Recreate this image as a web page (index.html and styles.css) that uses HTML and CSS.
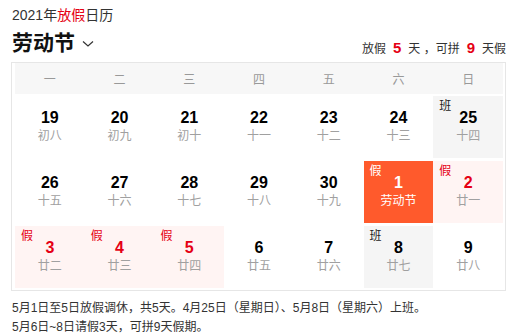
FILE: index.html
```html
<!DOCTYPE html>
<html lang="zh-CN">
<head>
<meta charset="utf-8">
<link rel="stylesheet" href="styles.css">
</head>
<body>
<div class="page">
  <div class="title">2021年<span class="red">放假</span>日历</div>
  <div class="head">
    <div class="holiday">劳动节<svg class="chev" width="12" height="8" viewBox="0 0 12 8"><path d="M1 1.5 L6 6 L11 1.5" fill="none" stroke="#333" stroke-width="1.2"/></svg></div>
    <div class="summary">放假<b class="num">5</b>天 ，可拼<b class="num">9</b>天假</div>
  </div>
  <div class="cal">
    <div class="weekdays">
      <span>一</span><span>二</span><span>三</span><span>四</span><span>五</span><span>六</span><span>日</span>
    </div>
    <div class="grid">
      <div class="cell"><b class="d">19</b><span class="l">初八</span></div>
      <div class="cell"><b class="d">20</b><span class="l">初九</span></div>
      <div class="cell"><b class="d">21</b><span class="l">初十</span></div>
      <div class="cell"><b class="d">22</b><span class="l">十一</span></div>
      <div class="cell"><b class="d">23</b><span class="l">十二</span></div>
      <div class="cell"><b class="d">24</b><span class="l">十三</span></div>
      <div class="cell work"><i class="tag">班</i><b class="d">25</b><span class="l">十四</span></div>

      <div class="cell"><b class="d">26</b><span class="l">十五</span></div>
      <div class="cell"><b class="d">27</b><span class="l">十六</span></div>
      <div class="cell"><b class="d">28</b><span class="l">十七</span></div>
      <div class="cell"><b class="d">29</b><span class="l">十八</span></div>
      <div class="cell"><b class="d">30</b><span class="l">十九</span></div>
      <div class="cell fest"><i class="tag">假</i><b class="d">1</b><span class="l">劳动节</span></div>
      <div class="cell rest"><i class="tag">假</i><b class="d">2</b><span class="l">廿一</span></div>

      <div class="cell rest"><i class="tag">假</i><b class="d">3</b><span class="l">廿二</span></div>
      <div class="cell rest"><i class="tag">假</i><b class="d">4</b><span class="l">廿三</span></div>
      <div class="cell rest"><i class="tag">假</i><b class="d">5</b><span class="l">廿四</span></div>
      <div class="cell"><b class="d">6</b><span class="l">廿五</span></div>
      <div class="cell"><b class="d">7</b><span class="l">廿六</span></div>
      <div class="cell work"><i class="tag">班</i><b class="d">8</b><span class="l">廿七</span></div>
      <div class="cell"><b class="d">9</b><span class="l">廿八</span></div>
    </div>
  </div>
  <div class="notes">
    <p>5月1日至5日放假调休，共5天。4月25日（星期日）、5月8日（星期六）上班。</p>
    <p>5月6日~8日请假3天，可拼9天假期。</p>
  </div>
</div>
</body>
</html>
```
FILE: styles.css
```css
* { box-sizing: border-box; }
html, body { margin: 0; padding: 0; background: #fff; }
body {
  font-family: "Liberation Sans", Arial, "Noto Sans CJK SC", sans-serif;
  color: #333;
  width: 518px;
  height: 334px;
  overflow: hidden;
}
.page { padding: 5px 12px 0 11px; }
.red { color: #e50014; }
.title {
  font-size: 14px;
  line-height: 20px;
  padding-left: 1px;
  color: #333;
}
.head {
  display: flex;
  justify-content: space-between;
  align-items: flex-end;
  height: 37px;
  padding: 0 0 5px 1px;
}
.holiday {
  font-size: 21px;
  font-weight: bold;
  line-height: 28px;
  color: #111;
  display: flex;
  align-items: center;
}
.chev { margin-left: 7px; margin-top: 2px; }
.summary {
  font-size: 12px;
  line-height: 18px;
  color: #333;
  margin-bottom: -1px;
}
.summary .num {
  color: #e50014;
  font-size: 15px;
  margin: 0 7px;
}
.cal {
  border: 1px solid #e6e6e6;
  width: 495px;
  padding: 0 2px 2px 3px;
}
.weekdays {
  display: grid;
  grid-template-columns: repeat(7, 1fr);
  height: 31px;
  background: #f7f7f7;
  align-items: center;
  text-align: center;
  font-size: 12px;
  color: #999;
  margin-bottom: 2px;
}
.grid {
  display: grid;
  grid-template-columns: repeat(7, 1fr);
  grid-auto-rows: 62px;
  row-gap: 3px;
}
.cell {
  position: relative;
  display: flex;
  flex-direction: column;
  align-items: center;
  justify-content: center;
  padding-bottom: 1px;
}
.d {
  font-size: 16px;
  line-height: 20px;
  color: #000;
}
.l {
  font-size: 12px;
  line-height: 17px;
  color: #a0a0a0;
}
.tag {
  position: absolute;
  left: 6px;
  top: 3px;
  font-style: normal;
  font-size: 12px;
  line-height: 14px;
  color: #222;
}
.work { background: #f5f5f5; }
.rest { background: #fff4f3; }
.rest .d, .rest .tag { color: #e50014; }
.fest { background: #ff5a2c; }
.fest .d, .fest .l, .fest .tag { color: #fff; }
.notes {
  padding: 8px 0 0 1px;
  font-size: 12px;
  line-height: 19px;
  color: #333;
}
.notes p { margin: 0; }
```
